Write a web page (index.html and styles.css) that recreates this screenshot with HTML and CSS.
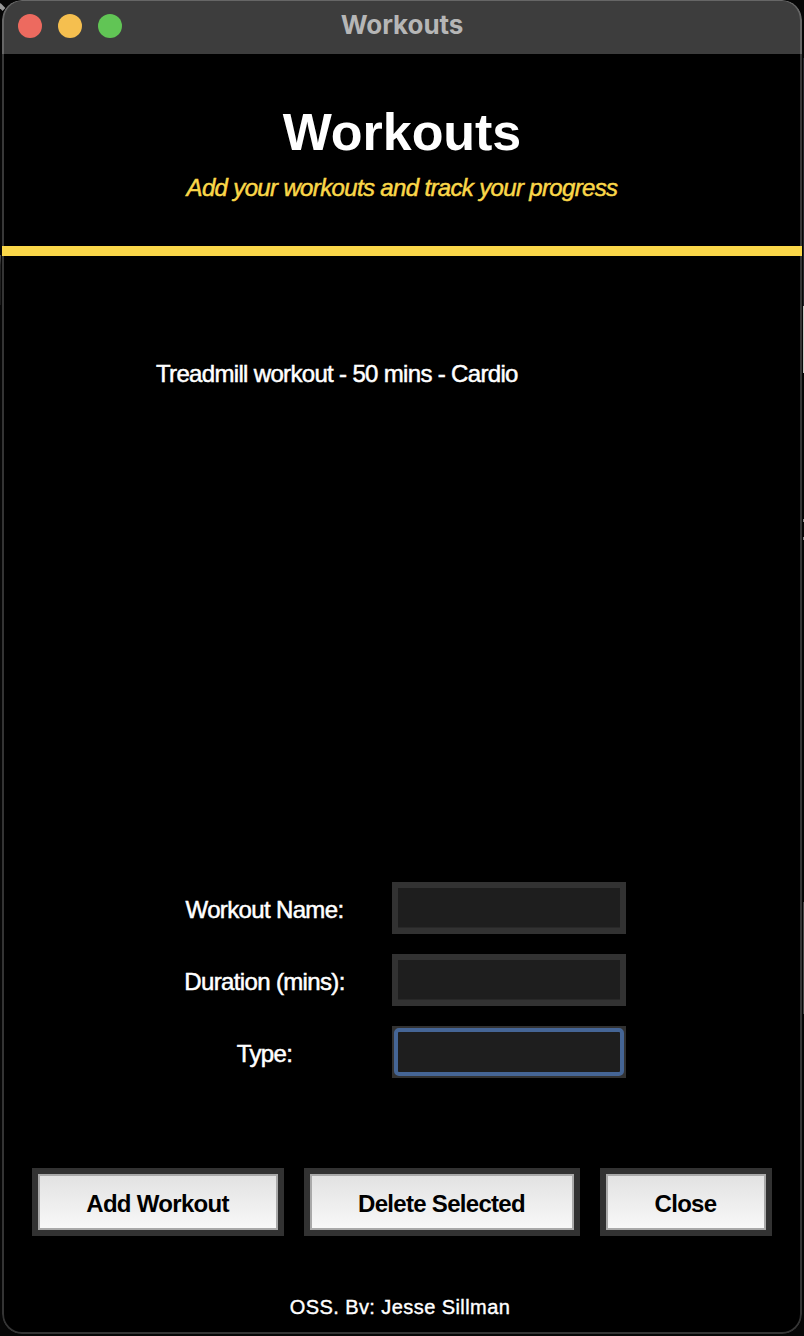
FILE: index.html
```
<!DOCTYPE html>
<html lang="en">
<head>
<meta charset="utf-8">
<title>Workouts</title>
<link rel="stylesheet" href="styles.css">
</head>
<body>
<i class="behind behind-corner"></i>
<i class="behind behind-left"></i>
<i class="behind behind-upper"></i>
<i class="behind behind-light"></i>
<i class="behind behind-dot"></i>
<i class="behind behind-dot behind-dot-low"></i>
<i class="behind behind-lower"></i>
<main class="window">
  <header class="titlebar">
    <div class="lights"><i class="light red"></i><i class="light amber"></i><i class="light green"></i></div>
    <span class="caption">Workouts</span>
  </header>
  <section class="heading">
    <h1>Workouts</h1>
    <p>Add your workouts and track your progress</p>
  </section>
  <div class="rule"></div>
  <ul class="list"><li>Treadmill workout - 50 mins - Cardio</li></ul>
  <form class="form">
    <label for="name">Workout Name:</label><input id="name" type="text">
    <label for="duration">Duration (mins):</label><input id="duration" type="text">
    <label for="type">Type:</label><span class="focus"><input id="type" type="text"></span>
  </form>
  <div class="actions">
    <button class="add"><span>Add Workout</span></button>
    <button class="delete"><span>Delete Selected</span></button>
    <button class="close"><span>Close</span></button>
  </div>
  <footer class="footer">OSS. Bv: Jesse Sillman</footer>
</main>
</body>
</html>
```
FILE: styles.css
```
* { box-sizing: border-box; }
body {
  margin: 0;
  height: 1336px;
  padding: 0 2px 2px;
  background: #060606;
  overflow: hidden;
  position: relative;
  font-family: "Liberation Sans", Arial, sans-serif;
  font-size: 24px;
  line-height: 28px;
  letter-spacing: -0.65px;
  color: #fff;
}
.window {
  height: 1334px;
  position: relative;
  display: flex;
  flex-direction: column;
  background: #000;
  border-radius: 20px;
  overflow: hidden;
}
/* window edge, drawn over the content below the rule */
.window::after {
  content: "";
  position: absolute;
  inset: 0;
  border: 2px solid #343434;
  border-radius: 20px;
  clip-path: inset(256px 0 0 0);
  pointer-events: none;
}
.titlebar {
  flex: none;
  height: 54px;
  position: relative;
  display: grid;
  grid-template-columns: 1fr auto 1fr;
  background: #3d3d3d;
  border: 2px solid #666;
  border-width: 1px 2px 0;
  border-radius: 20px 20px 0 0;
}
.lights { display: flex; gap: 16px; padding: 13px 0 0 14px; }
.light { width: 24px; height: 24px; border-radius: 50%; }
.red { background: #ed6a5f; }
.amber { background: #f5bf4f; }
.green { background: #61c555; }
.caption {
  font: 700 26px/32px Inter, sans-serif;
  letter-spacing: -0.05px;
  color: #b6b6b6;
  padding-top: 8px;
}
.heading {
  flex: none;
  height: 192px;
  padding-top: 48px;
  text-align: center;
  border: 2px solid #383838;
  border-width: 0 2px;
}
h1 { margin: 0; font-size: 52px; line-height: 60px; letter-spacing: -0.05px; }
.heading p { margin: 12px 0 0; font-style: italic; color: #fad749; -webkit-text-stroke: 0.5px #fad749; }
.rule { flex: none; height: 10px; background: #fad749; }
.list {
  flex: none;
  margin: 0;
  padding: 104px 0 0 154px;
  height: 626px;
  list-style: none;
  letter-spacing: -0.67px;
  -webkit-text-stroke: 0.5px #fff;
}
.form {
  display: grid;
  grid-template-columns: 162px 234px;
  grid-auto-rows: 52px;
  column-gap: 47px;
  row-gap: 20px;
  padding-left: 181px;
  align-items: center;
  text-align: center;
  white-space: nowrap;
  -webkit-text-stroke: 0.5px #fff;
}
.form label { padding: 4px 0 0 1px; }
.form input {
  width: 234px;
  height: 52px;
  border: 6px solid #323232;
  background: #1e1e1e;
  box-shadow: inset 0 -1px #282828;
  color: #fff;
  font: inherit;
  outline: none;
}
.focus { width: 234px; height: 52px; padding: 2px; background: #323232; }
.focus input {
  display: block;
  width: 230px;
  height: 48px;
  border: 4px solid #456595;
  border-radius: 5px;
  box-shadow: none;
}
.form input { margin-left: 0; }
.actions { display: flex; gap: 20px; padding: 90px 30px 0; }
button {
  height: 68px;
  padding: 0;
  border: 6px solid #323232;
  background: #323232;
  font: inherit;
  font-weight: 700;
  letter-spacing: -0.7px;
  color: #000;
}
button span {
  display: block;
  height: 56px;
  padding: 14px 1px 0 0;
  line-height: 28px;
  border: 2px solid #a9a9a9;
  background: linear-gradient(#e2e2e2, #f8f8f8);
}
.add { width: 252px; }
.delete { width: 276px; }
.close { width: 172px; }
.footer {
  margin-top: 59px;
  text-align: center;
  font-size: 20px;
  line-height: 24px;
  letter-spacing: 0.43px;
  padding-right: 4px;
  -webkit-text-stroke: 0.4px #fff;
}
/* slivers of the windows behind this one */
.behind { position: absolute; right: 0; width: 1px; }
.behind-corner { left: -2px; top: 5px; width: 7px; height: 4px; background: #999; transform: rotate(45deg); }
.behind-left { left: 0; top: 255px; height: 50px; background: linear-gradient(#555, #222 20%, #1a1a1a); }
.behind-upper { top: 58px; height: 248px; background: #25252b; }
.behind-light { top: 306px; height: 67px; background: #c8c8c4; }
.behind-dot { top: 519px; height: 3px; background: #888; }
.behind-dot-low { top: 537px; }
.behind-lower { top: 902px; height: 112px; background: #444; }
```
